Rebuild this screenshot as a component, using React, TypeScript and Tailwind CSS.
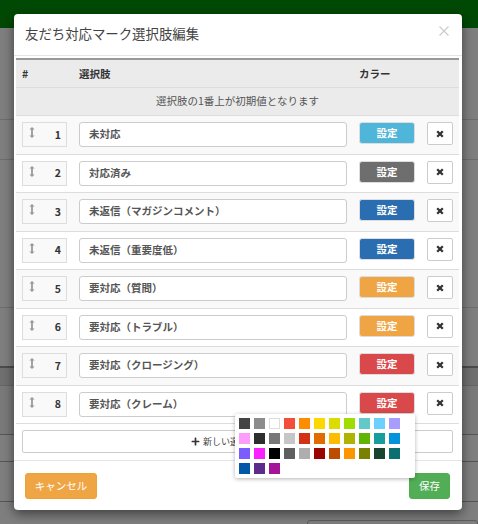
import { FaPlus } from 'react-icons/fa';

const choices = [
  { label: '未対応', color: 'bg-[#4fb6d9]' },
  { label: '対応済み', color: 'bg-[#6e6e6e]' },
  { label: '未返信（マガジンコメント）', color: 'bg-[#2a6db0]' },
  { label: '未返信（重要度低）', color: 'bg-[#2a6db0]' },
  { label: '要対応（質問）', color: 'bg-[#f0a544]' },
  { label: '要対応（トラブル）', color: 'bg-[#f0a544]' },
  { label: '要対応（クロージング）', color: 'bg-[#d9484a]' },
  { label: '要対応（クレーム）', color: 'bg-[#d9484a]' },
];

const palette = [
  'bg-[#444444]', 'bg-[#8c8c8c]', 'bg-[#ffffff]', 'bg-[#f44e3b]', 'bg-[#fe8c00]', 'bg-[#fcd800]',
  'bg-[#dbdc00]', 'bg-[#a0dc00]', 'bg-[#62c8c8]', 'bg-[#6cd0ff]', 'bg-[#a89cff]', 'bg-[#fd9cfa]',
  'bg-[#2e2e2e]', 'bg-[#777777]', 'bg-[#c6c6c6]', 'bg-[#d33115]', 'bg-[#e06c00]', 'bg-[#fcbc00]',
  'bg-[#adb500]', 'bg-[#60b500]', 'bg-[#169e9e]', 'bg-[#0094dc]', 'bg-[#7b5cff]', 'bg-[#fa20ff]',
  'bg-[#000000]', 'bg-[#5e5e5e]', 'bg-[#aeaeae]', 'bg-[#990500]', 'bg-[#bc4c00]', 'bg-[#fb9600]',
  'bg-[#7a8000]', 'bg-[#194530]', 'bg-[#0c7070]', 'bg-[#0058a8]', 'bg-[#5c2c8c]', 'bg-[#a31498]',
];

function DragIcon() {
  return (
    <svg width="6" height="11" viewBox="0 0 6 11" className="text-[#999]">
      <path d="M3 0 L5.6 2.6 H3.9 V8.4 H5.6 L3 11 L0.4 8.4 H2.1 V2.6 H0.4 Z" fill="currentColor" />
    </svg>
  );
}

function ChoiceRow({ index, label, color }: { index: number; label: string; color: string }) {
  return (
    <div className={`flex h-[38.5px] items-start gap-[12px] border-b border-[#ddd] pl-[6px] pt-[6px] ${index % 2 === 1 ? 'bg-[#f9f9f9]' : 'bg-white'}`}>
      <div className="flex h-[25px] w-[45px] items-center justify-between border border-[#ddd] bg-[#f9f9f9] pl-[6px] pr-[5px]">
        <span className="-mt-[4px]"><DragIcon /></span>
        <span className="text-[10.5px] font-bold text-[#333]">{index}</span>
      </div>
      <div className="flex h-[25px] w-[268px] items-center rounded-[3px] border border-[#ccc] bg-white pb-[1px] pl-[9px] text-[10.5px] font-bold text-[#555]">
        {label}
      </div>
      <div className={`flex h-[22px] w-[56px] items-center justify-center rounded-[3px] border border-[#ddd] text-[10.5px] font-bold text-white ${color}`}>
        設定
      </div>
      <div className="flex h-[23px] w-[26px] items-center justify-center rounded-[2px] border border-[#ccc] bg-white">
        <svg width="8" height="8" viewBox="0 0 8 8">
          <path d="M1.2 1.2 L6.8 6.8 M6.8 1.2 L1.2 6.8" stroke="#333" strokeWidth="2.3" />
        </svg>
      </div>
    </div>
  );
}

export default function App() {
  return (
    <div className="relative h-[524px] w-[478px] overflow-hidden bg-white font-['Noto_Sans_CJK_JP','Noto_Sans',sans-serif]">
      {/* page behind the dialog */}
      <div className="h-[28px] bg-[#009208]" />
      <div className="h-[92px] border-b border-[#ddd]" />
      <div className="h-[40px] border-b border-[#ddd]" />
      <div className="h-[148px] border-b border-[#ddd]" />
      <div className="h-[60px] border-b-2 border-[#999]" />
      <div className="h-[18px] border-b border-[#ccc] bg-[#e0e0e0]" />
      <div className="h-[49px] border-b border-[#aaa] bg-[#f5f5f5]" />
      <div className="h-[27px] border-b border-[#aaa]" />
      <div className="h-[40px] border-b border-[#aaa]" />
      <div className="absolute right-0 top-[520px] h-[10px] w-[171px] rounded-[3px] border border-[#bbb]" />

      <div className="absolute inset-0 bg-black/50" />

      <div className="absolute left-[14px] top-[14px] flex h-[496px] w-[448px] flex-col rounded-[4px] bg-white shadow-[0_4px_12px_rgba(0,0,0,0.5)]">
        <div className="relative flex h-[42px] items-center border-b border-[#e5e5e5] pb-[2px] pl-[11px] text-[13.4px] text-[#444]">
          友だち対応マーク選択肢編集
          <span className="absolute right-[13px] top-[12px]">
            <svg width="10" height="10" viewBox="0 0 10 10">
              <path d="M0.5 0.5 L9.5 9.5 M9.5 0.5 L0.5 9.5" stroke="#ccc" strokeWidth="1.2" />
            </svg>
          </span>
        </div>

        <div className="ml-[2px] mt-[2px] w-[443px]">
          <div className="flex h-[30px] items-center border-t-2 border-b border-t-[#999] border-b-[#ddd] bg-[#ebebeb] text-[10.5px] font-bold text-[#333]">
            <span className="ml-[6px] w-[57px]">#</span>
            <span className="w-[280px]">選択肢</span>
            <span>カラー</span>
          </div>
          <div className="flex h-[28px] items-center justify-center border-b border-[#ddd] bg-[#ebebeb] pb-[2px] text-[10.5px] text-[#555]">
            選択肢の1番上が初期値となります
          </div>
          {choices.map((c, i) => (
            <ChoiceRow key={c.label} index={i + 1} label={c.label} color={c.color} />
          ))}
          <div className="px-[6px] pt-[6px]">
            <div className="flex h-[23px] w-[431px] items-center justify-center gap-[3px] rounded-[2px] border border-[#ccc] bg-white text-[9px] text-[#444]">
              <FaPlus size={9} className="text-[#333]" />
              新しい選択肢を追加
            </div>
          </div>
        </div>

        <div className="mt-[7px] flex flex-1 items-start justify-between border-t border-[#e5e5e5] pl-[11px] pr-[12px] pt-[12px]">
          <div className="flex h-[26px] w-[72px] items-center justify-center rounded-[3px] border border-[#eea236] bg-[#f0a544] text-[10.5px] text-white">
            キャンセル
          </div>
          <div className="flex h-[26px] w-[41px] items-center justify-center rounded-[3px] border border-[#4cae4c] bg-[#52ae56] text-[10.5px] text-white">
            保存
          </div>
        </div>
      </div>

      {/* color picker popover */}
      <div className="absolute left-[235px] top-[414px] flex h-[64px] w-[180px] flex-wrap content-start gap-[4px] rounded-[2px] bg-white pb-[4px] pl-[4px] pr-[10px] pt-[4px] shadow-[0_1px_4px_rgba(0,0,0,0.3)]">
        {palette.map((p) => (
          <div key={p} className={`h-[11px] w-[11px] ${p} ${p === 'bg-[#ffffff]' ? 'border border-[#ddd]' : ''}`} />
        ))}
      </div>
    </div>
  );
}
